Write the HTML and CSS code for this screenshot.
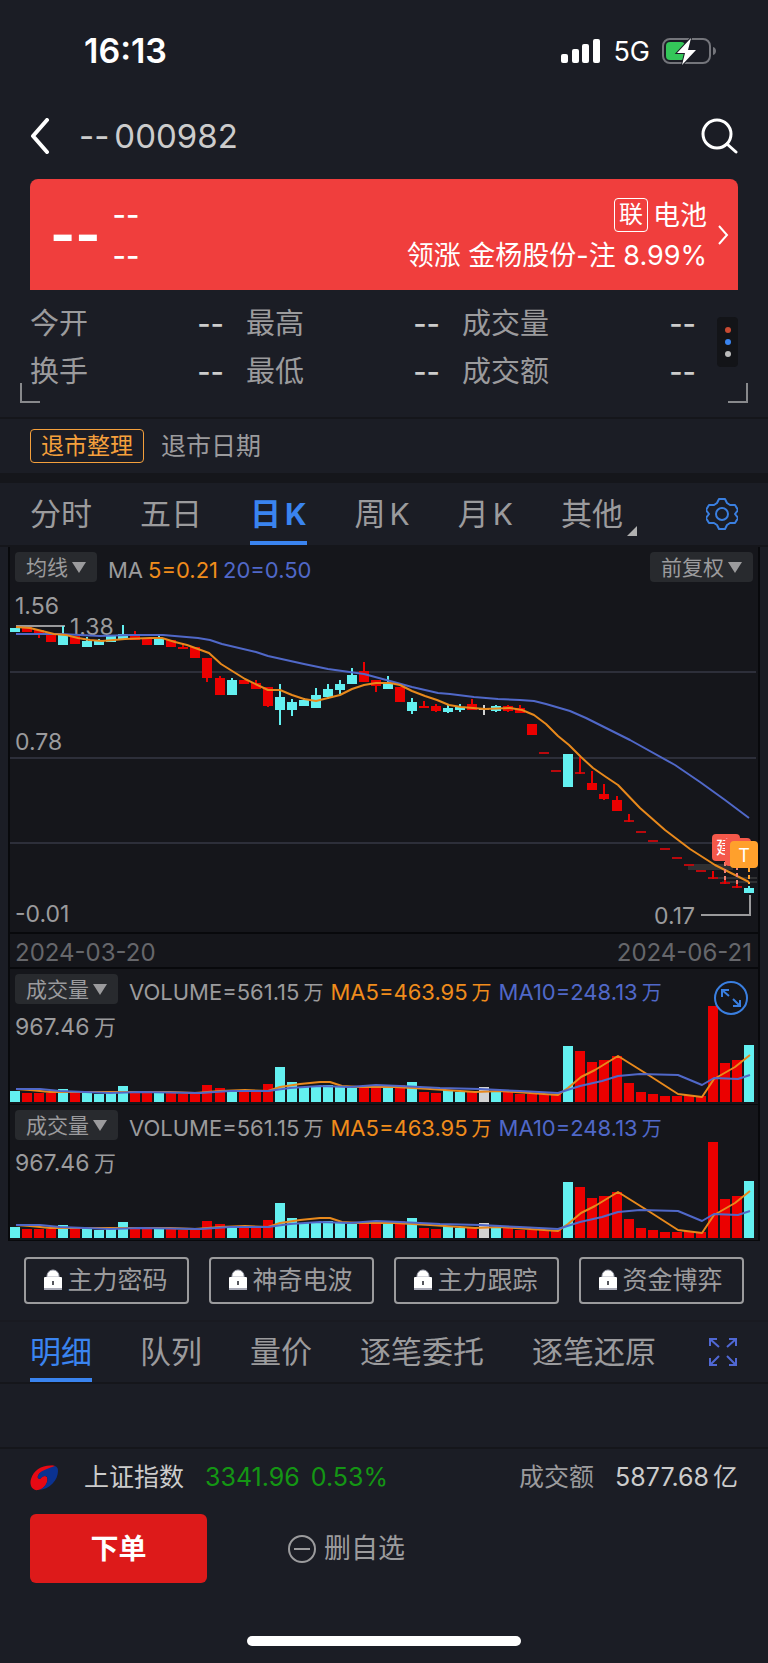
FILE: index.html
```html
<!DOCTYPE html>
<html lang="zh-CN">
<head>
<meta charset="utf-8">
<meta name="viewport" content="width=device-width, initial-scale=1">
<title>000982 日K</title>
<link rel="stylesheet" href="styles.css">
</head>
<body>
<div class="status">
  <span class="clock">16:13</span>
  <div class="status-icons">
    <svg width="40" height="24" viewBox="0 0 40 24" fill="#fff" aria-hidden="true"><rect y="15" width="7" height="9" rx="2"/><rect x="11" y="10" width="7" height="14" rx="2"/><rect x="21" y="5" width="7" height="19" rx="2"/><rect x="32" width="7" height="24" rx="2"/></svg>
    <span class="network">5G</span>
    <svg width="54" height="28" viewBox="0 0 54 28" aria-hidden="true"><rect x="1" y="2" width="47" height="24" rx="7" fill="none" stroke="#74757b" stroke-width="2"/><path d="M51 10c4 1 4 7 0 8z" fill="#74757b"/><rect x="4" y="5" width="19" height="18" rx="4" fill="#34c759"/><path d="M29 1L15 16h8l-3 12L34 13h-8z" fill="#fff" stroke="#1b1d25" stroke-width="2" paint-order="stroke"/></svg>
  </div>
</div>

<header class="nav">
  <button class="icon-btn" aria-label="返回"><svg width="20" height="36" viewBox="0 0 20 36"><path d="M17 2L3 18l14 16" fill="none" stroke="#fff" stroke-width="4" stroke-linecap="round" stroke-linejoin="round"/></svg></button>
  <h1><span class="dash">--</span><span>000982</span></h1>
  <button class="icon-btn" aria-label="搜索"><svg width="38" height="36" viewBox="0 0 38 36"><g fill="none" stroke="#fff" stroke-width="3" stroke-linecap="round"><circle cx="17" cy="16" r="14"/><path d="M27 26l9 8"/></g></svg></button>
</header>

<main>
  <a class="quote" href="#sector">
    <span class="price">--</span>
    <span class="changes"><span>--</span><span>--</span></span>
    <span class="sector">
      <span class="sector-name"><span class="link-tag">联</span>电池</span>
      <span>领涨 金杨股份-注 8.99%</span>
    </span>
    <svg width="12" height="22" viewBox="0 0 12 22" aria-hidden="true"><path d="M2 2l8 9-8 9" fill="none" stroke="#fff" stroke-width="2"/></svg>
  </a>

  <section class="stats">
    <dl>
      <div><dt>今开</dt><dd>--</dd></div>
      <div><dt>最高</dt><dd>--</dd></div>
      <div><dt>成交量</dt><dd>--</dd></div>
      <div><dt>换手</dt><dd>--</dd></div>
      <div><dt>最低</dt><dd>--</dd></div>
      <div><dt>成交额</dt><dd>--</dd></div>
    </dl>
    <button class="more" aria-label="更多"><i></i><i></i><i></i></button>
  </section>

  <section class="notice"><span class="notice-tag">退市整理</span><span>退市日期</span></section>

  <nav class="tabs">
    <a href="#t1">分时</a>
    <a href="#t2">五日</a>
    <a href="#t3" class="active strong">日<span class="latin">K</span></a>
    <a href="#t4">周<span class="latin">K</span></a>
    <a href="#t5">月<span class="latin">K</span></a>
    <a href="#t6" class="has-more">其他</a>
    <button class="icon-btn tabs-end" aria-label="设置"><svg width="32" height="34" viewBox="1 0 32 34"><g fill="none" stroke="#3a7fe0" stroke-width="2" stroke-linejoin="round"><path d="M14 2h6l2 4 3 2h5l3 5-3 4 3 4-3 5h-5l-3 2-2 4h-6l-2-4-3-2H4l-3-5 3-4-3-4 3-5h5l3-2z"/><circle cx="17" cy="17" r="6"/></g></svg></button>
  </nav>

  <section class="charts">
    <div class="kline">
      <div class="chart-head">
        <button class="pick">均线<i></i></button>
        <span class="legend legend-short"><span>MA</span><span class="orange">5=0.21</span><span class="blue">20=0.50</span></span>
        <button class="pick pick-end">前复权<i></i></button>
      </div>
      <svg class="plot" viewBox="10 588 748 344" role="img" aria-label="日K线图">
        <path d="M10 672H756M10 758H756M10 843H756" stroke="#2d2f3a" stroke-width="2"/>
        <g fill="#2f3032"><rect x="688" y="864" width="45" height="6"/><rect x="712" y="877" width="45" height="2"/><rect x="722" y="881" width="35" height="2"/></g>
        <g class="label"><text x="15" y="614">1.56</text><text x="70" y="635">1.38</text><text x="15" y="750">0.78</text><text x="15" y="922">-0.01</text><text x="695" y="924" text-anchor="end">0.17</text></g>
        <path d="M16 626H65M701 915H750V895" fill="none" stroke="#9a9a9c" stroke-width="2"/>
        <path d="M15 628V632M63 635V645M87 641V647M99 641V645M111 635V642M123 634V639M159 639V645M232 680V695M280 697V710M292 702V710M304 700V706M316 695V708M328 689V697M340 684V690M352 675V684M388 684V689M412 702V711M448 708V712M460 707V710M496 706V711M568 754V787M749 888V893" stroke="#63f0f0" stroke-width="10"/>
        <path d="M63 626V645M87 637V647M99 639V645M123 625V639M159 635V645M232 678V690M280 684V725M292 699V716M304 698V706M316 688V708M328 684V699M340 680V694M352 668V684M388 676V689M412 698V714M448 704V713M460 704V712M496 705V712M749 886V893" stroke="#63f0f0" stroke-width="2"/>
        <path d="M27 627V632M39 630V635M51 635V642M75 636V644M135 634V640M147 639V645M171 640V647M183 647V649M195 647V658M207 658V678M220 678V695M244 680V684M256 683V689M268 687V706M364 671V682M376 680V686M400 687V702M424 706V708M436 706V711M472 704V710M508 706V711M520 708V713M532 724V735M592 783V790M604 794V799M617 800V811" stroke="#eb0000" stroke-width="10"/>
        <path d="M544 752V754M556 770V772M580 772V774M629 820V822M641 831V833M653 840V842M665 848V850M677 857V859M689 864V866M701 870V872M713 877V879M725 882V884M737 886V888" stroke="#b8090d" stroke-width="10"/>
        <path d="M39 630V638M135 631V640M183 643V649M207 658V682M220 676V695M256 680V689M268 687V707M364 662V682M376 680V692M424 701V708M436 704V712M472 699V710M508 705V712M520 705V713M580 757V774M592 771V790M604 784V800M617 796V811M629 814V822M713 871V879M725 879V884M737 884V888" stroke="#eb0000" stroke-width="2"/>
        <path d="M479 709H489M484 705V715" stroke="#d2d2d2" stroke-width="2"/>
        <path d="M16 634H60L100 636 130 635H163L198 638 210 640 222 644 256 652 268 656 304 664 328 669 364 674 390 681 412 687 438 693 450 694 474 697 498 699 520 700 534 701 546 704 570 711 586 718 606 728 630 740 675 765 700 782 725 800 749 818" class="line blue-line"/>
        <path d="M16 627L30 628 42 631 54 634 66 635 78 638 90 640 102 641 125 639 150 638 162 638 175 642 187 645 198 649 209 653 221 664 245 679 268 690 280 690 292 695 304 699 316 701 340 695 352 689 364 685 376 683H390L400 685 412 691 425 696 437 700 449 705 461 707 485 709 510 708 522 710 534 715 546 724 558 736 569 745 581 757 593 768 606 777 618 785 640 808 665 830 690 849 715 865 749 882" class="line orange-line"/>
        <path d="M725 862V880M737 866V884" stroke="#f08070" stroke-width="2" stroke-dasharray="4 3"/>
        <path d="M749 868V884" stroke="#ffa02c" stroke-width="2" stroke-dasharray="4 3"/>
        <rect x="712" y="834" width="28" height="27" rx="4" fill="#f4584a"/>
        <text x="716" y="854" class="badge">建</text>
        <rect x="725" y="838" width="26" height="28" rx="4" fill="#f4584a"/>
        <rect x="730" y="841" width="28" height="27" rx="4" fill="#ffa02c"/>
        <text x="744" y="862" class="badge" text-anchor="middle">T</text>
      </svg>
    </div>
    <div class="dates"><span>2024-03-20</span><span>2024-06-21</span></div>
    <div class="volume">
      <div class="chart-head">
        <button class="pick">成交量<i></i></button>
        <span class="legend"><span>VOLUME=561.15<span class="unit">万</span></span><span class="orange">MA5=463.95<span class="unit">万</span></span><span class="blue">MA10=248.13<span class="unit">万</span></span></span>
      </div>
      <svg class="plot" viewBox="10 1004 748 100" role="img" aria-label="成交量图">
        <defs>
          <g id="volume-plot">
            <path d="M15 1102V1091M63 1102V1089M87 1102V1093M99 1102V1094M111 1102V1093M123 1102V1086M159 1102V1093M232 1102V1092M280 1102V1067M292 1102V1082M304 1102V1087M316 1102V1087M328 1102V1085M340 1102V1087M352 1102V1088M388 1102V1088M412 1102V1082M448 1102V1090M460 1102V1092M496 1102V1092M568 1102V1046M749 1102V1045" stroke="#63f0f0" stroke-width="10"/>
            <path d="M27 1102V1093M39 1102V1093M51 1102V1093M75 1102V1093M135 1102V1091M147 1102V1092M171 1102V1092M183 1102V1094M195 1102V1094M207 1102V1085M220 1102V1088M244 1102V1092M256 1102V1092M268 1102V1084M364 1102V1088M376 1102V1088M400 1102V1085M424 1102V1092M436 1102V1093M472 1102V1092M508 1102V1092M520 1102V1094M532 1102V1094M544 1102V1094M556 1102V1094M580 1102V1051M592 1102V1062M604 1102V1060M617 1102V1056M629 1102V1083M641 1102V1092M653 1102V1094M665 1102V1096M677 1102V1096M689 1102V1095M701 1102V1096M713 1102V1006M725 1102V1063M737 1102V1060" stroke="#eb0000" stroke-width="10"/>
            <path d="M484 1102V1087" stroke="#d2d2d2" stroke-width="10"/>
            <path d="M16 1089L30 1090 50 1092H170L195 1093 220 1091 245 1090 268 1091 280 1087 300 1084 320 1082H330L342 1086 360 1087H395L430 1089 475 1092 500 1091 530 1093 558 1095 568 1088 581 1077 595 1070 618 1056 650 1076 678 1094 702 1097 714 1079 735 1067 750 1055" class="line orange-line"/>
            <path d="M16 1089H40L60 1091 110 1093 140 1092 200 1093 230 1091H268L290 1088 320 1086 350 1087 376 1085 400 1086 440 1088 480 1089 520 1091 558 1093 580 1086 602 1081 618 1076 640 1074 678 1075 702 1085 714 1078 738 1079 750 1075" class="line blue-line"/>
            <text x="15" y="1035" class="label">967.46</text><text x="94" y="1035" class="label unit-label">万</text>
          </g>
        </defs>
        <use href="#volume-plot"/>
      </svg>
      <button class="expand" aria-label="放大"><svg width="36" height="34" viewBox="0 0 36 34"><g fill="none" stroke="#3a7fe0" stroke-width="2"><circle cx="18" cy="17" r="16"/><path d="M9 16V9h7M9 9l7 6M20 18l7 7M27 19v6h-7"/></g></svg></button>
    </div>
    <div class="volume">
      <div class="chart-head">
        <button class="pick">成交量<i></i></button>
        <span class="legend"><span>VOLUME=561.15<span class="unit">万</span></span><span class="orange">MA5=463.95<span class="unit">万</span></span><span class="blue">MA10=248.13<span class="unit">万</span></span></span>
      </div>
      <svg class="plot" viewBox="10 1004 748 100" role="img" aria-label="成交量图"><use href="#volume-plot"/></svg>
    </div>
  </section>

  <section class="locked">
    <button><svg width="20" height="24" viewBox="0 0 20 24"><use href="#lock"/></svg>主力密码</button>
    <button><svg width="20" height="24" viewBox="0 0 20 24"><use href="#lock"/></svg>神奇电波</button>
    <button><svg width="20" height="24" viewBox="0 0 20 24"><use href="#lock"/></svg>主力跟踪</button>
    <button><svg width="20" height="24" viewBox="0 0 20 24"><defs><g id="lock"><path d="M4 8V7a6 6 0 0 1 12 0v1z" fill="#fff" stroke="#a9abb8"/><rect x="1" y="8" width="18" height="12" rx="1" fill="#fff"/><path d="M1 20h18" stroke="#a9abb8" stroke-width="2"/><path d="M10 12v4" stroke="#55565c" stroke-width="2"/></g></defs><use href="#lock"/></svg>资金博弈</button>
  </section>

  <nav class="tabs detail-tabs">
    <a href="#d1" class="active">明细</a>
    <a href="#d2">队列</a>
    <a href="#d3">量价</a>
    <a href="#d4">逐笔委托</a>
    <a href="#d5">逐笔还原</a>
    <button class="icon-btn tabs-end" aria-label="全屏"><svg width="30" height="30" viewBox="1 0 30 30"><path d="M3 9V2h7M3 2l9 8M22 2h7v7M29 2l-9 8M3 21v7h7M3 28l9-9M22 28h7v-7M29 28l-9-9" fill="none" stroke="#5068d4" stroke-width="2"/></svg></button>
  </nav>
  <div class="detail-body"></div>
</main>

<footer>
  <div class="index">
    <svg width="28" height="26" viewBox="0 0 28 26" aria-hidden="true"><path d="M25 1C14-1 4 4 1 14c-2 7 2 12 7 11 7-1 11-9 9-13-2-2-5-1-6 1-2 2-4 0-3-2 2-6 9-9 17-10z" fill="#e60914"/><path d="M25 1c-8 1-15 4-17 10-1 2 1 4 3 2 2-2 5-3 6-1 2 4-2 11-8 13C20 24 28 15 28 6c0-3-1-4-3-5z" fill="#0b3290"/><path d="M25 1c-8-1-14 2-17 8 5-4 11-6 17-8z" fill="#e60914"/></svg>
    <span class="index-name">上证指数</span>
    <span class="down">3341.96</span>
    <span class="down">0.53%</span>
    <span class="turnover">成交额</span>
    <span>5877.68<span class="yi">亿</span></span>
  </div>
  <div class="actions">
    <button class="order">下单</button>
    <button class="remove"><svg width="30" height="30" viewBox="0 0 30 30"><g fill="none" stroke="#9b9b9d" stroke-width="2"><circle cx="15" cy="15" r="13"/><path d="M7 15h16"/></g></svg>删自选</button>
  </div>
  <div class="home"></div>
</footer>
</body>
</html>
```
FILE: styles.css
```css
* { box-sizing: border-box; }

body {
  margin: 0;
  background: #1b1d25;
  color: #9b9b9d;
  font-family: Inter, "Noto Sans CJK SC", sans-serif;
  font-size: 25px;
  line-height: 1;
}

button {
  border: 0;
  padding: 0;
  background: none;
  color: inherit;
  font: inherit;
  line-height: 1;
}

a { color: inherit; text-decoration: none; }
svg { display: block; flex: none; }
h1, dl, dd { margin: 0; }

.status {
  display: flex;
  justify-content: space-between;
  align-items: center;
  height: 102px;
  padding: 0 52px 0 84px;
  color: #fff;
}
.clock { font-size: 34px; font-weight: 600; }
.status-icons { display: flex; align-items: center; gap: 12px; }
.network { font-size: 27px; }

.nav {
  display: flex;
  align-items: center;
  height: 77px;
  padding: 0 30px 10px;
}
.nav h1 {
  display: flex;
  flex: 1;
  gap: 5px;
  padding-left: 29px;
  padding-top: 2px;
  color: #ccc;
  font-size: 33px;
  font-weight: 400;
}

.quote {
  display: flex;
  align-items: center;
  height: 111px;
  margin: 0 30px;
  padding: 0 9px 0 20px;
  border-radius: 8px 8px 0 0;
  background: #f03e3d;
  color: #fff;
}
.price { font-size: 54px; font-weight: 700; }
.changes { display: flex; flex-direction: column; gap: 12px; margin-left: 12px; font-size: 29px; font-weight: 500; }
.sector {
  display: flex;
  flex: 1;
  flex-direction: column;
  align-items: flex-end;
  gap: 10px;
  margin-right: 10px;
  padding-bottom: 2px;
  font-size: 27px;
}
.sector-name { display: flex; align-items: center; gap: 5px; }
.link-tag {
  padding: 3px 4px;
  border: 1px solid #fff;
  border-radius: 4px;
  font-size: 24px;
  line-height: 26px;
}

.stats {
  position: relative;
  display: flex;
  align-items: flex-start;
  gap: 21px;
  height: 127px;
  padding: 19px 30px 0;
}
.stats::before, .stats::after {
  content: "";
  position: absolute;
  bottom: 14px;
  width: 18px;
  height: 18px;
  border-bottom: 2px solid #88898c;
}
.stats::before { left: 20px; border-left: 2px solid #88898c; }
.stats::after { right: 20px; border-right: 2px solid #88898c; }
.stats dl {
  display: grid;
  flex: 1;
  grid-template-columns: 194fr 194fr 234fr;
  column-gap: 22px;
  row-gap: 19px;
  font-size: 29px;
}
.stats dl div { display: flex; justify-content: space-between; }
.stats dd { color: #ccc; font-weight: 500; }
.more {
  display: flex;
  flex-direction: column;
  justify-content: center;
  align-items: center;
  gap: 6px;
  width: 21px;
  height: 50px;
  margin-top: 8px;
  border-radius: 4px;
  background: #131418;
}
.more i { width: 6px; height: 6px; border-radius: 50%; background: #bbb; }
.more i:nth-child(1) { background: #c84a32; }
.more i:nth-child(2) { background: #3a84f0; }

.notice {
  display: flex;
  align-items: center;
  gap: 17px;
  height: 66px;
  padding: 0 30px;
  border-top: 2px solid #15161b;
  border-bottom: 10px solid #15161b;
}
.notice-tag {
  padding: 0 10px;
  border: 1px solid #f5a03c;
  border-radius: 4px;
  color: #f5a03c;
  font-size: 23px;
  line-height: 32px;
}

.tabs {
  display: flex;
  gap: 48px;
  height: 64px;
  padding: 0 30px;
  border-bottom: 2px solid #15161b;
  font-size: 31px;
  line-height: 62px;
}
.tabs a { position: relative; white-space: nowrap; }
.tabs .latin { margin-left: 4px; font-size: 30px; }
.tabs .active { color: #3a84f0; }
.tabs .strong { font-weight: 700; }
.tabs .active::after {
  content: "";
  position: absolute;
  left: 0;
  right: 0;
  bottom: 0;
  height: 4px;
  background: #3a84f0;
}
.has-more::after {
  content: "";
  position: absolute;
  right: -14px;
  bottom: 9px;
  border-left: 10px solid transparent;
  border-bottom: 10px solid #b0b0b0;
}
.tabs-end { margin-left: auto; }
.detail-tabs { height: 62px; line-height: 60px; }

.charts {
  margin: 0 8px;
  border: solid #08090c;
  border-width: 0 2px;
  background: #15161b;
}
.chart-head {
  display: flex;
  align-items: flex-start;
  height: 41px;
  padding: 5px 5px 0;
}
.pick {
  display: flex;
  align-items: center;
  gap: 4px;
  height: 30px;
  padding: 0 11px 0 11px;
  border-radius: 4px;
  background: #282a2e;
  font-size: 21px;
}
.pick i {
  border: 7px solid transparent;
  border-top: 11px solid #9b9b9d;
  border-bottom: 0;
}
.pick-end { margin-left: auto; }
.legend {
  display: flex;
  gap: 7px;
  padding: 7px 0 0 11px;
  font-size: 22px;
  white-space: nowrap;
}
.legend-short { gap: 5px; }
.unit { margin-left: 4px; font-size: 20px; }
.yi { margin-left: 4px; }
.orange { color: #f08c1c; }
.blue { color: #5068c8; }
.plot { width: 100%; height: auto; }
.plot .label { fill: #9b9b9d; font-size: 23px; }
.plot .unit-label { font-size: 22px; }
.badge { fill: #fff; font-size: 18px; }
.line { fill: none; stroke-width: 2; stroke-linejoin: round; }
.orange-line { stroke: #e8891c; }
.blue-line { stroke: #5068c8; }
.dates {
  display: flex;
  justify-content: space-between;
  align-items: center;
  height: 37px;
  padding: 5px 6px 0 5px;
  border-top: 2px solid #08090c;
  border-bottom: 2px solid #08090c;
  color: #66676b;
  font-size: 24px;
}
.volume { position: relative; border-bottom: 1px solid #08090c; }
.volume .chart-head { height: 35px; }
.expand { position: absolute; top: 12px; right: 9px; }

.locked {
  display: grid;
  grid-template-columns: repeat(4, 1fr);
  gap: 20px;
  padding: 16px 24px;
  border-bottom: 2px solid #191a21;
}
.locked button {
  display: flex;
  justify-content: center;
  align-items: center;
  gap: 4px;
  height: 47px;
  padding-right: 2px;
  border: 2px solid #9b9b9d;
  border-radius: 4px;
  font-size: 25px;
  white-space: nowrap;
}

.detail-body { height: 65px; border-bottom: 2px solid #15161b; }

.index {
  display: flex;
  align-items: center;
  height: 57px;
  padding: 0 30px;
  color: #ccc;
}
.index-name { margin: 0 21px 0 26px; }
.down { margin-right: 11px; color: #149614; }
.turnover { margin: 0 21px 0 auto; color: #9b9b9d; }
.actions { display: flex; align-items: center; gap: 80px; padding: 8px 30px; }
.order {
  width: 177px;
  height: 69px;
  border-radius: 6px;
  background: #dd1a1a;
  color: #fff;
  font-size: 28px;
  font-weight: 700;
}
.remove { display: flex; align-items: center; gap: 7px; font-size: 27px; }
.home {
  width: 274px;
  height: 10px;
  margin: 45px auto 17px;
  border-radius: 5px;
  background: #fff;
}
```
